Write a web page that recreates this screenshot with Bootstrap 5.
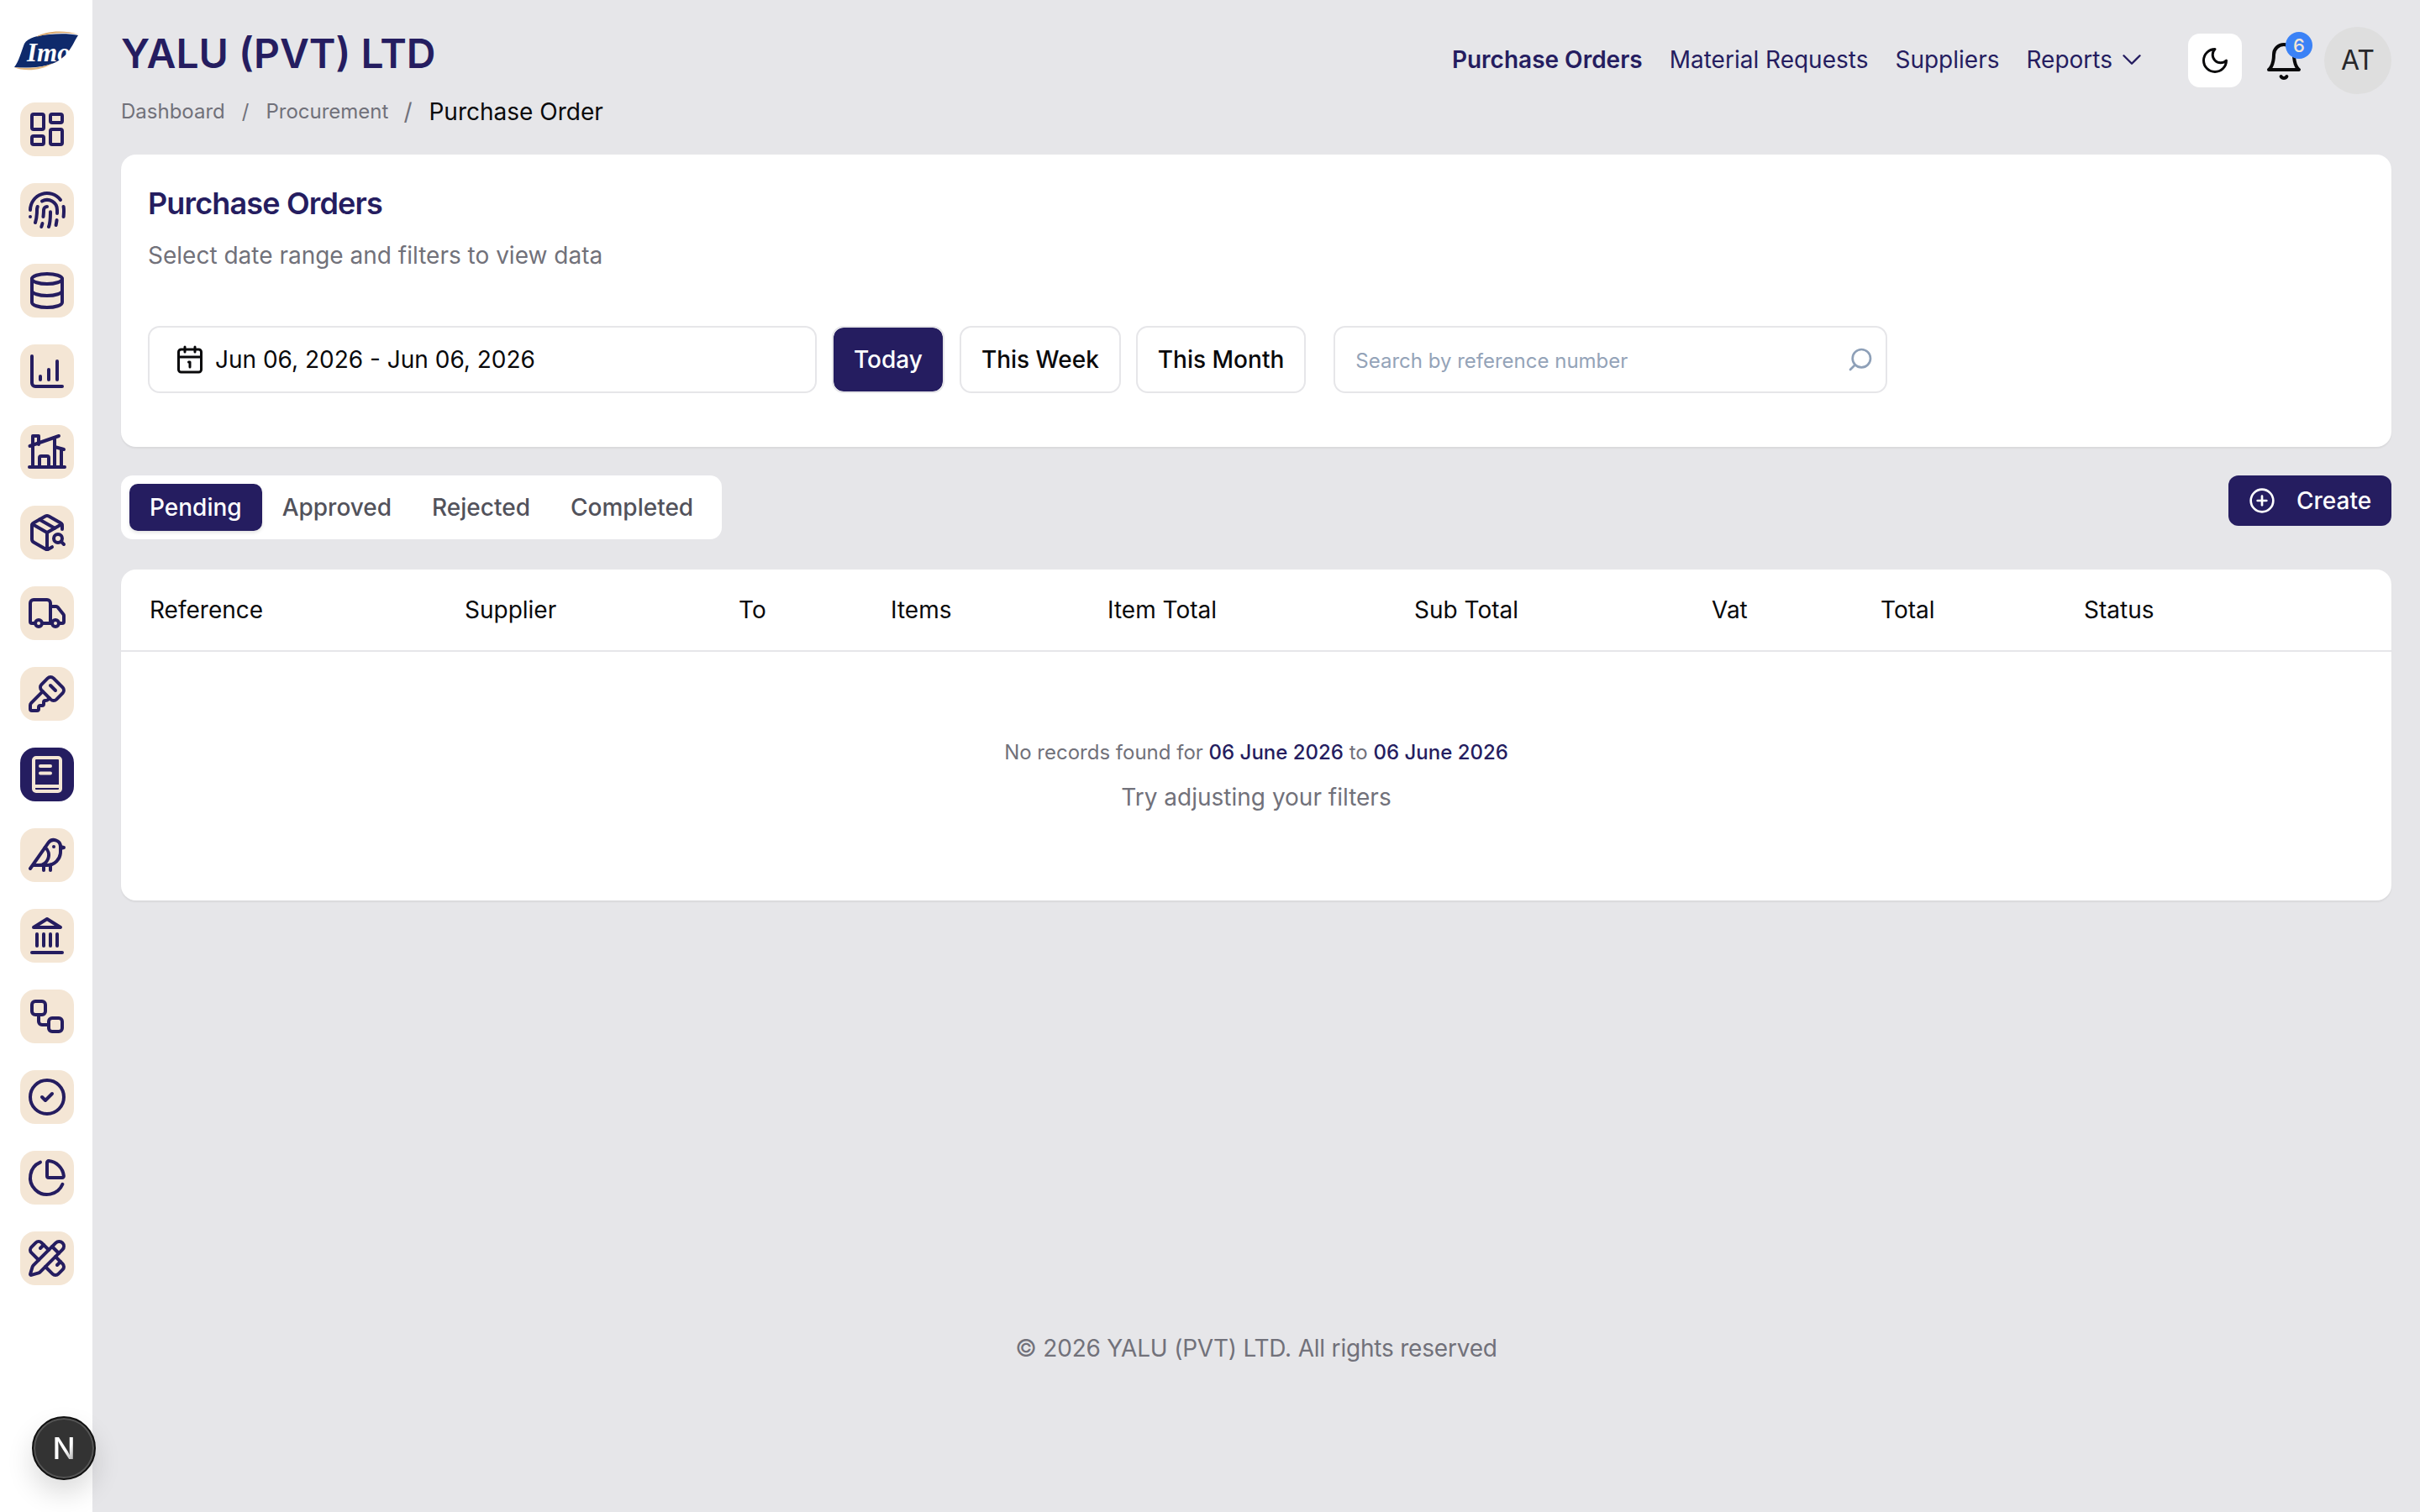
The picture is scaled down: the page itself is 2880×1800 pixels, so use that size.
<!doctype html>
<html lang="en">
<head>
<meta charset="utf-8">
<title>Purchase Orders</title>
<link href="https://cdn.jsdelivr.net/npm/bootstrap@5.3.0/dist/css/bootstrap.min.css" rel="stylesheet">
<style>
:root{--navy:#251d60;--sand:#f4e6d5;--line:#e6e6e9;--mute:#71717a;}
html,body{height:100%;}
body{font-family:Inter,"Liberation Sans",sans-serif;background:#e6e6e9;color:#09090b;font-size:28px;min-height:1800px;}
.rail{width:110px;flex:none;background:#fff;padding-top:36px;}
.rail-logo{display:block;width:80px;height:50px;margin:0 0 36px 15px;}
.rail-stack{display:flex;flex-direction:column;align-items:center;gap:32px;padding-left:2px;}
.rail-tile{width:64px;height:64px;border-radius:18px;background:var(--sand);color:var(--navy);display:flex;align-items:center;justify-content:center;}
.rail-tile.is-on{background:var(--navy);color:var(--sand);}
.ico{display:block;fill:none;stroke:currentColor;stroke-width:2;stroke-linecap:round;stroke-linejoin:round;flex:none;}
.ico-48{width:48px;height:48px;}
.page-main{flex:1 1 auto;min-width:0;padding:0 34px 0 34px;display:flex;flex-direction:column;}
.head-row{padding-top:34px;height:184px;}
.head-end{margin-top:-2px;}
.co-title{font-size:48px;font-weight:600;line-height:60px;color:var(--navy);margin:0;}
.crumbs{--bs-breadcrumb-margin-bottom:0;--bs-breadcrumb-divider-color:var(--mute);--bs-breadcrumb-item-padding-x:20px;margin-top:22px;line-height:34px;font-size:24px;color:var(--mute);align-items:center;}
.crumbs .breadcrumb-item a{color:var(--mute);text-decoration:none;}
.crumbs .breadcrumb-item.active{color:#09090b;font-size:28px;padding-left:18px;}
.top-nav{gap:32px;height:80px;}
.top-link{color:var(--navy);text-decoration:none;font-size:28px;line-height:34px;margin-top:-2px;}
.top-link.is-current{font-weight:600;}
.caret-ico{width:38px;height:38px;stroke-width:1.5;}
.moon-btn{width:64px;height:64px;border-radius:14px;background:#fff;border:0;color:#09090b;padding:0;}
.bell-wrap{width:48px;height:48px;color:#09090b;margin:2px 24px 0 -6px;}
.bell-count{position:absolute;top:-11px;left:26px;width:32px;height:32px;background:#3b82f6;color:var(--sand);font-size:22px;font-weight:500;border-radius:50%;}
.avatar-disc{width:80px;height:80px;border-radius:50%;background:#dedede;font-size:32px;color:#27272a;}
.sheet{--bs-card-border-width:0;--bs-card-border-radius:18px;--bs-card-bg:#fff;box-shadow:0 2px 2px rgba(0,0,0,.06);}
.sheet-filter{height:348px;padding:36px 32px 0;}
.sheet-title{font-size:36px;font-weight:600;line-height:44px;color:var(--navy);margin:0;letter-spacing:-.85px;}
.sheet-sub{font-size:28px;line-height:40px;color:var(--mute);margin:20px 0 0;}
.filter-row{margin-top:64px;gap:18px;}
.date-box{width:796px;height:80px;border:2px solid #e6e6e9;border-radius:14px;padding:0 0 0 30px;gap:12px;font-size:28px;color:#09090b;}
.ico-36{width:36px;height:36px;}
.range-btn{height:80px;padding:0 24px;font-size:28px;font-weight:500;border:2px solid #e6e6e9;border-radius:14px;background:#fff;color:#09090b;}
.range-btn.is-on{background:var(--navy);color:#fff;background-clip:padding-box;}
.search-box{width:659px;height:80px;margin-left:15px;margin-bottom:0;border:2px solid #e6e6e9;border-radius:14px;padding:0 14px 0 24px;}
.search-box input{border:0;outline:0;flex:1;font-size:24px;font-family:inherit;background:transparent;min-width:0;padding:4px 0 0;}
.search-box input::placeholder{color:#94a3b8;opacity:1;}
.search-ico{width:32px;height:32px;color:#8ea0b8;transform:scaleX(-1);}
.tabs-row{margin-top:34px;margin-bottom:36px;}
.tab-box{background:#fff;border-radius:14px;padding:10px;height:76px;}
.tab-pill{--bs-nav-link-padding-x:24px;--bs-nav-link-padding-y:0;--bs-nav-link-color:#52525b;--bs-nav-link-hover-color:#52525b;--bs-nav-pills-link-active-bg:var(--navy);--bs-nav-pills-border-radius:10px;font-size:28px;font-weight:500;line-height:56px;}
.tab-pill.active{box-shadow:0 2px 4px rgba(0,0,0,.12);}
.make-btn{height:60px;width:194px;background:var(--navy);color:#fff;border:0;border-radius:12px;font-size:28px;font-weight:500;padding:0 0 0 24px;gap:25px;}
.ico-32{width:32px;height:32px;}
.po-table{--bs-table-bg:transparent;margin:0;table-layout:fixed;width:100%;font-size:28px;}
.po-table th{height:97px;padding:0 0 1px 34px;font-weight:400;color:#09090b;vertical-align:middle;border-bottom:2px solid #e6e6e9;}
.po-table th:nth-child(1){width:375px}.po-table th:nth-child(2){width:326px}.po-table th:nth-child(3){width:181px}
.po-table th:nth-child(4){width:258px}.po-table th:nth-child(5){width:365px}.po-table th:nth-child(6){width:354px}
.po-table th:nth-child(7){width:201px}.po-table th:nth-child(8){width:242px}
.po-table td{border:0;text-align:center;height:297px;padding:102px 0 0;vertical-align:top;}
.none-a{font-size:24px;line-height:36px;color:var(--mute);margin:0;}
.none-a b{font-weight:500;color:var(--navy);}
.none-b{font-size:28px;line-height:40px;color:var(--mute);margin:15px 0 0;}
.foot-note{margin-top:auto;padding-bottom:175px;line-height:40px;font-size:28px;letter-spacing:-.2px;color:var(--mute);text-align:center;}
.dev-mark{position:fixed;left:38px;top:1686px;width:76px;height:76px;border-radius:50%;background:#333;border:2px solid #111;box-shadow:inset 0 0 0 2px #555,0 16px 32px rgba(0,0,0,.14);font-size:36px;font-weight:500;}
.dev-mark span{background:linear-gradient(135deg,#fff 55%,#777);-webkit-background-clip:text;background-clip:text;color:transparent;}
</style>
</head>
<body class="d-flex m-0">
<aside class="rail">
  <svg class="rail-logo" viewBox="0 0 80 50" role="img" aria-label="Imo">
    <path d="M2 44C8 36 10 26 14 16C18 9 30 6 44 5C56 4 68 4 78 6C74 12 72 18 66 26C60 34 50 40 40 42C28 45 12 45 2 44Z" fill="#0f2a6b"/>
    <path d="M28 8C38 1 60 -1 79 5C62 2 44 3 28 8Z" fill="#dba86a"/>
    <path d="M2 44C18 46 34 45 48 39C34 49 12 49 2 44Z" fill="#e3b67e"/>
    <text x="17" y="37" font-family="Liberation Serif" font-style="italic" font-weight="700" font-size="31" fill="#fff">Imo</text>
  </svg>
  <nav class="rail-stack">
    <a class="rail-tile" href="#"><svg class="ico ico-48" viewBox="0 0 24 24"><rect width="7" height="9" x="3" y="3" rx="1"/><rect width="7" height="5" x="14" y="3" rx="1"/><rect width="7" height="9" x="14" y="12" rx="1"/><rect width="7" height="5" x="3" y="16" rx="1"/></svg></a>
    <a class="rail-tile" href="#"><svg class="ico ico-48" viewBox="0 0 24 24"><path d="M12 10a2 2 0 0 0-2 2c0 1.02-.1 2.51-.26 4"/><path d="M14 13.12c0 2.38 0 6.38-1 8.88"/><path d="M17.29 21.02c.12-.6.43-2.3.5-3.02"/><path d="M2 12a10 10 0 0 1 18-6"/><path d="M2 16h.01"/><path d="M21.8 16c.2-2 .131-5.354 0-6"/><path d="M5 19.5C5.5 18 6 15 6 12a6 6 0 0 1 .34-2"/><path d="M8.65 22c.21-.66.45-1.32.57-2"/><path d="M9 6.8a6 6 0 0 1 9 5.2v2"/></svg></a>
    <a class="rail-tile" href="#"><svg class="ico ico-48" viewBox="0 0 24 24"><ellipse cx="12" cy="5" rx="9" ry="3"/><path d="M3 5V19A9 3 0 0 0 21 19V5"/><path d="M3 12A9 3 0 0 0 21 12"/></svg></a>
    <a class="rail-tile" href="#"><svg class="ico ico-48" viewBox="0 0 24 24"><path d="M3 3v16a2 2 0 0 0 2 2h16"/><path d="M8 17v-2"/><path d="M13 17v-6"/><path d="M18 17V6"/></svg></a>
    <a class="rail-tile" href="#"><svg class="ico ico-48" viewBox="0 0 24 24"><path d="M1.5 21h21"/><path d="M3.5 21V2.5H7v5"/><path d="M1.75 8.5 19 2.5"/><path d="M16.5 3.5V21"/><path d="M16.5 9 22 10.5"/><path d="M20.5 10.2V21"/><path d="M7.5 21v-5.5a1 1 0 0 1 1-1H12a1 1 0 0 1 1 1V21"/></svg></a>
    <a class="rail-tile" href="#"><svg class="ico ico-48" viewBox="0 0 24 24"><path d="M21 10V8a2 2 0 0 0-1-1.73l-7-4a2 2 0 0 0-2 0l-7 4A2 2 0 0 0 3 8v8a2 2 0 0 0 1 1.73l7 4a2 2 0 0 0 2 0l2-1.14"/><path d="m7.5 4.27 9 5.15"/><polyline points="3.29 7 12 12 20.71 7"/><line x1="12" x2="12" y1="22" y2="12"/><circle cx="18.5" cy="15.5" r="2.5"/><path d="M20.27 17.27 22 19"/></svg></a>
    <a class="rail-tile" href="#"><svg class="ico ico-48" viewBox="0 0 24 24"><path d="M14 18V6a2 2 0 0 0-2-2H4a2 2 0 0 0-2 2v11a1 1 0 0 0 1 1h2"/><path d="M15 18H9"/><path d="M19 18h2a1 1 0 0 0 1-1v-3.65a1 1 0 0 0-.22-.624l-3.48-4.35A1 1 0 0 0 17.52 8H14"/><circle cx="17" cy="18" r="2"/><circle cx="7" cy="18" r="2"/></svg></a>
    <a class="rail-tile" href="#"><svg class="ico ico-48" viewBox="0 0 24 24"><path d="M12.4 2.7a2.5 2.5 0 0 1 3.4 0l5.5 5.5a2.5 2.5 0 0 1 0 3.4l-3.7 3.7a2.5 2.5 0 0 1-3.4 0L8.7 9.8a2.5 2.5 0 0 1 0-3.4z"/><path d="m14 7 3 3"/><path d="m9.4 10.6-6.814 6.814A2 2 0 0 0 2 18.828V21a1 1 0 0 0 1 1h3a1 1 0 0 0 1-1v-1a1 1 0 0 1 1-1h1a1 1 0 0 0 1-1v-1a1 1 0 0 1 1-1h.172a2 2 0 0 0 1.414-.586l.814-.814"/></svg></a>
    <a class="rail-tile is-on" href="#"><svg class="ico ico-48" viewBox="0 0 24 24"><rect x="4" y="2" width="16" height="20" rx="1.5"/><path d="M8 7h6"/><path d="M8 11.3h6"/><path d="M5 19h14"/></svg></a>
    <a class="rail-tile" href="#"><svg class="ico ico-48" viewBox="0 0 24 24"><path d="M16 7h.01"/><path d="M3.4 18H12a8 8 0 0 0 8-8V7a4 4 0 0 0-7.28-2.3L2 20"/><path d="m20 7 2 .5-2 .5"/><path d="M10 18v3"/><path d="M14 17.75V21"/><path d="M7 18a6 6 0 0 0 3.84-10.61"/></svg></a>
    <a class="rail-tile" href="#"><svg class="ico ico-48" viewBox="0 0 24 24"><line x1="3" x2="21" y1="22" y2="22"/><line x1="6" x2="6" y1="18" y2="11"/><line x1="10" x2="10" y1="18" y2="11"/><line x1="14" x2="14" y1="18" y2="11"/><line x1="18" x2="18" y1="18" y2="11"/><polygon points="12 2 20 7 4 7"/></svg></a>
    <a class="rail-tile" href="#"><svg class="ico ico-48" viewBox="0 0 24 24"><rect width="8" height="8" x="3" y="3" rx="2"/><path d="M7 11v4a2 2 0 0 0 2 2h4"/><rect width="8" height="8" x="13" y="13" rx="2"/></svg></a>
    <a class="rail-tile" href="#"><svg class="ico ico-48" viewBox="0 0 24 24"><circle cx="12" cy="12" r="10"/><path d="m9 12 2 2 4-4"/></svg></a>
    <a class="rail-tile" href="#"><svg class="ico ico-48" viewBox="0 0 24 24"><path d="M21 12c.552 0 1.005-.449.95-.998a10 10 0 0 0-8.953-8.951c-.55-.055-.998.398-.998.95v8a1 1 0 0 0 1 1z"/><path d="M21.21 15.89A10 10 0 1 1 8 2.83"/></svg></a>
    <a class="rail-tile" href="#"><svg class="ico ico-48" viewBox="0 0 24 24"><path d="M13 7 8.7 2.7a2.41 2.41 0 0 0-3.4 0L2.7 5.3a2.41 2.41 0 0 0 0 3.4L7 13"/><path d="m8 6 2-2"/><path d="m18 16 2-2"/><path d="m17 11 4.3 4.3c.94.94.94 2.46 0 3.4l-2.6 2.6c-.94.94-2.46.94-3.4 0L11 17"/><path d="M21.174 6.812a1 1 0 0 0-3.986-3.987L3.842 16.174a2 2 0 0 0-.5.83l-1.321 4.352a.5.5 0 0 0 .623.622l4.353-1.32a2 2 0 0 0 .83-.497z"/><path d="m15 5 4 4"/></svg></a>
  </nav>
</aside>

<main class="page-main">
  <header class="head-row d-flex justify-content-between align-items-start">
    <div>
      <h1 class="co-title">YALU (PVT) LTD</h1>
      <ol class="breadcrumb crumbs">
        <li class="breadcrumb-item"><a href="#">Dashboard</a></li>
        <li class="breadcrumb-item"><a href="#">Procurement</a></li>
        <li class="breadcrumb-item active">Purchase Order</li>
      </ol>
    </div>
    <div class="d-flex align-items-center top-nav head-end">
      <a class="top-link is-current" href="#">Purchase Orders</a>
      <a class="top-link" href="#">Material Requests</a>
      <a class="top-link" href="#">Suppliers</a>
      <a class="top-link d-flex align-items-center gap-1" href="#">Reports
        <svg class="ico caret-ico" viewBox="0 0 24 24"><path d="m6 9 6 6 6-6"/></svg></a>
      <button class="moon-btn d-flex align-items-center justify-content-center ms-3" type="button" aria-label="Theme">
        <svg class="ico ico-36" viewBox="0 0 24 24"><path d="M12 3a6 6 0 0 0 9 9 9 9 0 1 1-9-9Z"/></svg>
      </button>
      <div class="d-flex align-items-center">
        <div class="bell-wrap position-relative">
          <svg class="ico ico-48" viewBox="0 0 24 24"><path d="M6 8a6 6 0 0 1 12 0c0 7 3 9 3 9H3s3-2 3-9"/><path d="M10.3 21a1.94 1.94 0 0 0 3.4 0"/></svg>
          <span class="bell-count d-flex align-items-center justify-content-center">6</span>
        </div>
        <div class="avatar-disc d-flex align-items-center justify-content-center">AT</div>
      </div>
    </div>
  </header>

  <section class="card sheet sheet-filter">
    <h2 class="sheet-title">Purchase Orders</h2>
    <p class="sheet-sub">Select date range and filters to view data</p>
    <div class="d-flex align-items-center filter-row">
      <div class="date-box d-flex align-items-center">
        <svg class="ico ico-36" viewBox="0 0 24 24"><path d="M11 14h1v4"/><path d="M16 2v4"/><path d="M3 10h18"/><path d="M8 2v4"/><rect x="3" y="4" width="18" height="18" rx="2"/></svg>
        <span>Jun 06, 2026 - Jun 06, 2026</span>
      </div>
      <button class="btn range-btn is-on" type="button">Today</button>
      <button class="btn range-btn" type="button">This Week</button>
      <button class="btn range-btn" type="button">This Month</button>
      <label class="search-box d-flex align-items-center">
        <input type="text" placeholder="Search by reference number" aria-label="Search">
        <svg class="ico search-ico" viewBox="0 0 24 24"><circle cx="11" cy="11" r="8"/><path d="m21 21-4.3-4.3"/></svg>
      </label>
    </div>
  </section>

  <div class="d-flex justify-content-between align-items-start tabs-row">
    <ul class="nav nav-pills tab-box">
      <li class="nav-item"><a class="nav-link tab-pill active" href="#">Pending</a></li>
      <li class="nav-item"><a class="nav-link tab-pill" href="#">Approved</a></li>
      <li class="nav-item"><a class="nav-link tab-pill" href="#">Rejected</a></li>
      <li class="nav-item"><a class="nav-link tab-pill" href="#">Completed</a></li>
    </ul>
    <button class="btn make-btn d-flex align-items-center" type="button">
      <svg class="ico ico-32" viewBox="0 0 24 24"><circle cx="12" cy="12" r="10"/><path d="M8 12h8"/><path d="M12 8v8"/></svg>
      <span>Create</span>
    </button>
  </div>

  <section class="card sheet overflow-hidden">
    <table class="table po-table">
      <thead>
        <tr><th>Reference</th><th>Supplier</th><th>To</th><th>Items</th><th>Item Total</th><th>Sub Total</th><th>Vat</th><th>Total</th><th>Status</th></tr>
      </thead>
      <tbody>
        <tr><td colspan="9">
          <p class="none-a">No records found for <b>06 June 2026</b> to <b>06 June 2026</b></p>
          <p class="none-b">Try adjusting your filters</p>
        </td></tr>
      </tbody>
    </table>
  </section>

  <footer class="foot-note">© 2026 YALU (PVT) LTD. All rights reserved</footer>
</main>

<div class="dev-mark d-flex align-items-center justify-content-center"><span>N</span></div>
<script src="https://cdn.jsdelivr.net/npm/bootstrap@5.3.0/dist/js/bootstrap.bundle.min.js"></script>
</body>
</html>
